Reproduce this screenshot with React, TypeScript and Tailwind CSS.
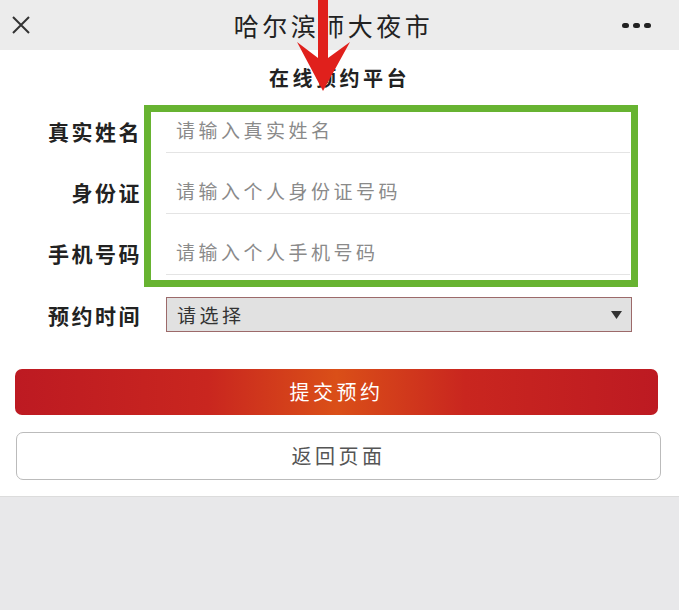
const font = { fontFamily: '"Noto Sans CJK SC", "Noto Sans", sans-serif' };

const fields = [
  { label: "真实姓名", placeholder: "请输入真实姓名" },
  { label: "身份证", placeholder: "请输入个人身份证号码" },
  { label: "手机号码", placeholder: "请输入个人手机号码" },
];

export default function App() {
  return (
    <div className="relative h-[610px] w-[679px] overflow-hidden bg-[#e8e8ea]" style={font}>
      {/* top bar */}
      <div className="flex h-[50px] items-center justify-between bg-[#ececec] px-[10px]">
        <svg width="20" height="20" viewBox="0 0 20 20" className="ml-[1px]">
          <path d="M2 2 L18 18 M18 2 L2 18" stroke="#333" strokeWidth="2" />
        </svg>
        <h1 className="ml-[14px] text-[25px] leading-[30px] tracking-[3.5px] text-[#222]">哈尔滨师大夜市</h1>
        <div className="mr-[18px] flex gap-[4px]">
          <span className="h-[5px] w-[7px] rounded-full bg-[#222]" />
          <span className="h-[5px] w-[7px] rounded-full bg-[#222]" />
          <span className="h-[5px] w-[7px] rounded-full bg-[#222]" />
        </div>
      </div>

      {/* page body */}
      <div className="border-b border-[#dcdcdc] bg-white pb-[16px]">
        <h2 className="pt-[16px] text-center text-[20px] font-bold leading-[24px] tracking-[3.5px] text-[#222]">
          在线预约平台
        </h2>

        <div className="relative pt-[2px]">
          {fields.map((f) => (
            <div key={f.label} className="flex items-center pt-[16px]">
              <label className="w-[142px] text-right text-[21px] font-bold leading-[28px] tracking-[2.5px] text-[#222]">
                {f.label}
              </label>
              <div className="ml-[24px] mr-[49px] flex h-[45px] flex-1 items-center border-b border-[#e4e4e4] pl-[10px] text-[19px] tracking-[3.5px] text-[#8a8a8a]">
                {f.placeholder}
              </div>
            </div>
          ))}
          {/* green annotation box */}
          <div className="absolute left-[144px] top-[15px] h-[182px] w-[494px] border-[7px] border-[#67b331]" />
        </div>

        <div className="mt-[22px] flex items-center">
          <label className="w-[142px] text-right text-[21px] font-bold leading-[28px] tracking-[2.5px] text-[#222]">
            预约时间
          </label>
          <div className="ml-[24px] mr-[47px] flex h-[35px] flex-1 items-center justify-between border border-[#9c6a6a] bg-[#e1e1e1] pl-[10px] pr-[9px]">
            <span className="text-[19px] leading-[26px] tracking-[3.5px] text-[#333]">请选择</span>
            <svg width="11" height="8" viewBox="0 0 11 8">
              <path d="M0 0 H11 L5.5 8 Z" fill="#333" />
            </svg>
          </div>
        </div>

        <div className="mx-[15px] mt-[37px] flex flex-col gap-[17px]">
          <button className="mr-[6px] h-[46px] rounded-[7px] bg-[linear-gradient(90deg,#bd1a22_0%,#c9261f_30%,#da4f18_50%,#c9261f_70%,#bd1a22_100%)] text-[20px] tracking-[3.5px] text-white">
            提交预约
          </button>
          <button className="ml-[1px] mr-[3px] h-[48px] rounded-[7px] border border-[#bbbbbb] bg-white text-[20px] tracking-[3.5px] text-[#555]">
            返回页面
          </button>
        </div>
      </div>

      {/* red annotation arrow */}
      <svg className="absolute left-0 top-0" width="679" height="110" viewBox="0 0 679 110">
        <path d="M318 0 H328 V58 L350 42 L323 91 L297 42 L318 58 Z" fill="#e0201c" />
      </svg>
    </div>
  );
}
